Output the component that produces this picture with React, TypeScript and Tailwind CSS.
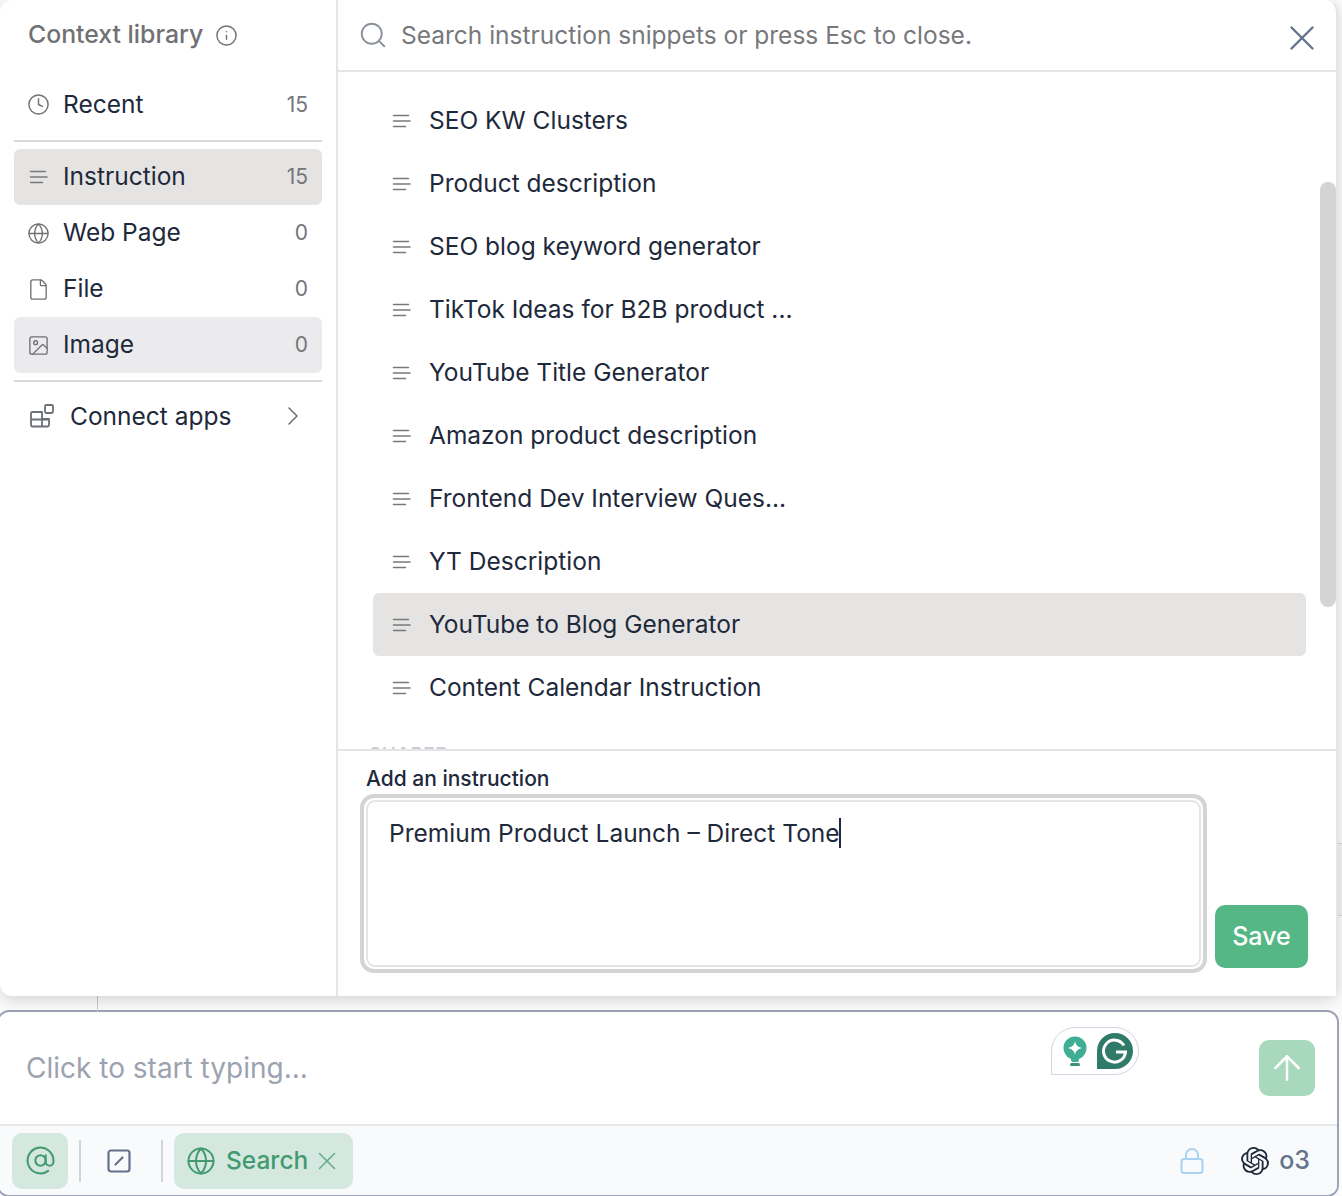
import { ArrowUp, AtSign, ChevronRight, Clock, File, Globe, Image, Info, Search, X } from 'lucide-react';
import { SiOpenai } from 'react-icons/si';

const categories = [
  { label: 'Instruction', count: 15, icon: 'lines', bg: 'bg-[#e5e4e2]' },
  { label: 'Web Page', count: 0, icon: 'globe', bg: '' },
  { label: 'File', count: 0, icon: 'file', bg: '' },
  { label: 'Image', count: 0, icon: 'image', bg: 'bg-[#ebebed]' },
];

const snippets = [
  'SEO KW Clusters',
  'Product description',
  'SEO blog keyword generator',
  'TikTok Ideas for B2B product ...',
  'YouTube Title Generator',
  'Amazon product description',
  'Frontend Dev Interview Ques...',
  'YT Description',
  'YouTube to Blog Generator',
  'Content Calendar Instruction',
];

function LinesIcon() {
  return (
    <svg width="23" height="20" viewBox="0 0 23 20" fill="none" stroke="#78797d" strokeWidth="1.5" strokeLinecap="round" className="shrink-0">
      <path d="M3.500 4.500h15M3.500 10h16.500M3.500 15.500h12" />
    </svg>
  );
}

function AppsIcon() {
  return (
    <svg width="26" height="26" viewBox="0 0 26 26" fill="none" stroke="#6b6f76" strokeWidth="1.8" strokeLinejoin="round" className="shrink-0">
      <path d="M2 10.500a1.500 1.500 0 0 1 1.500-1.500H13v14.500H3.500A1.500 1.500 0 0 1 2 22zM2 16.500h18M13 16h7v6a1.500 1.500 0 0 1-1.500 1.500H13" />
      <rect x="16" y="2" width="8" height="8" rx="1.500" />
    </svg>
  );
}

function CategoryIcon({ name }: { name: string }) {
  if (name === 'lines') return <LinesIcon />;
  if (name === 'globe') return <Globe size={23} strokeWidth={1.4} className="shrink-0 text-[#6f7175]" />;
  if (name === 'file') return <File size={23} strokeWidth={1.4} className="shrink-0 text-[#6f7175]" />;
  return <Image size={23} strokeWidth={1.4} className="shrink-0 text-[#6f7175]" />;
}

function GrammarlyBadge() {
  return (
    <div className="absolute left-[1052px] top-[15px] flex h-[48px] w-[88px] items-center gap-[10px] rounded-r-[24px] rounded-tl-[24px] border border-[#d5d5e3] bg-white pl-[11px]">
      <svg width="24" height="30" viewBox="0 0 24 30" className="shrink-0">
        <circle cx="12" cy="12" r="11.500" fill="#3fae94" />
        <path d="M8 20h8v4a2 2 0 0 1-2 2h-4a2 2 0 0 1-2-2z" fill="#3fae94" />
        <path d="M12 5c.8 4 2.800 6 7 7-4.200 1-6.200 3-7 7-.8-4-2.800-6-7-7 4.200-1 6.200-3 7-7z" fill="#fff" />
        <rect x="7" y="27" width="10" height="3" rx="1.500" fill="#3b8f7c" />
      </svg>
      <svg width="36" height="36" viewBox="0 0 36 36" className="shrink-0">
        <path d="M18 0a18 18 0 0 1 0 36H0V18A18 18 0 0 1 18 0z" fill="#2f7a69" />
        <path d="M27 12.500a11 11 0 1 0 1.500 6.500H19" fill="none" stroke="#fff" strokeWidth="3" />
      </svg>
    </div>
  );
}

export default function App() {
  return (
    <div className="relative h-[1196px] w-[1342px] overflow-hidden bg-[#fbfbfb] font-['Inter',sans-serif] text-[#1e293b]">
      {/* page behind the popup */}
      <div className="absolute right-0 top-[843px] h-[73px] w-[4px] border-y border-[#d9d9d9] bg-[#f4f4f4]" />
      <div className="absolute left-[97px] top-[990px] h-[22px] w-px bg-[#c9c9c9]" />

      {/* Context library popup */}
      <div className="relative flex h-[996px] w-[1338px] rounded-[12px] border-r-2 border-[#e5e5e5] bg-white shadow-[0_4px_16px_rgba(0,0,0,0.16)]">
        <aside className="flex w-[338px] shrink-0 flex-col border-r-2 border-[#e5e5e5] px-[14px]">
          <div className="flex h-[70px] items-center gap-[14px] pl-[14px] text-[24.8px] font-medium text-[#6f7175]">
            <span>Context library</span>
            <Info size={23} strokeWidth={1.5} className="-ml-[2px]" />
          </div>
          <div className="flex h-[70px] items-center gap-[13px] pl-[13px] pr-[14px]">
            <Clock size={23} strokeWidth={1.5} className="-mt-px shrink-0 text-[#6f7175]" />
            <span className="-mt-[2px] flex-1 text-[24.500px]">Recent</span>
            <span className="text-[21px] text-[#73757a]">15</span>
          </div>
          <div className="mb-[7px] h-[2px] bg-[#d9d9d9]" />
          {categories.map((c) => (
            <div key={c.label} className={`flex h-[56px] items-center gap-[13px] rounded-[6px] pl-[13px] pr-[14px] ${c.bg}`}>
              <CategoryIcon name={c.icon} />
              <span className="-mt-[2px] flex-1 text-[24.500px]">{c.label}</span>
              <span className="text-[21px] text-[#73757a]">{c.count}</span>
            </div>
          ))}
          <div className="mt-[7px] h-[2px] bg-[#d9d9d9]" />
          <div className="flex h-[68px] items-center gap-[15px] pl-[15px] pr-[13px]">
            <AppsIcon />
            <span className="flex-1 text-[24.500px]">Connect apps</span>
            <ChevronRight size={32} strokeWidth={1.2} className="text-[#6f7175]" />
          </div>
        </aside>

        <main className="relative flex min-w-0 flex-1 flex-col">
          <div className="flex h-[72px] shrink-0 items-center gap-[13px] border-b-2 border-[#e5e5e5] pl-[20px] pr-[13px]">
            <Search size={30} strokeWidth={1.5} className="shrink-0 text-[#8b929c]" />
            <span className="mt-px flex-1 text-[24.500px] text-[#76787c]">Search instruction snippets or press Esc to close.</span>
            <X size={42} strokeWidth={1.4} className="mt-[5px] shrink-0 text-[#64748b]" />
          </div>

          <div className="relative h-[677px] shrink-0 overflow-hidden px-[35px] pt-[17px]">
            <div className="w-[933px]">
              {snippets.map((s) => (
                <div key={s} className={`flex h-[63px] items-center gap-[16px] rounded-[6px] pl-[17px] ${s === 'YouTube to Blog Generator' ? 'bg-[#e5e4e2]' : ''}`}>
                  <LinesIcon />
                  <span className="text-[24.500px]">{s}</span>
                </div>
              ))}
            </div>
            <p className="mt-[22px] -ml-[4px] text-[19px] font-medium tracking-[0.5px] text-[#c5cad3]">SHARED</p>
            <div className="absolute right-0 top-[110px] h-[425px] w-4 rounded-full bg-[#d4d4d4]" />
          </div>

          <div className="flex h-[247px] shrink-0 flex-col border-t-2 border-[#e5e5e5] bg-white pl-[22px] pr-[28px]">
            <p className="ml-[6px] mt-[14px] text-[21px] font-medium leading-[28px]">Add an instruction</p>
            <div className="mt-px flex items-end gap-[8px]">
              <div className="h-[179px] w-[847px] rounded-[14px] border-[4px] border-[#d4d4d2] bg-white p-[2px]">
                <div className="h-full rounded-[9px] border-2 border-[#e5e5e5] px-[21px] pt-[10px]">
                  <span className="text-[24.500px] leading-[36px]">Premium Product Launch – Direct Tone</span>
                  <span className="-ml-px inline-block h-[30px] w-[2px] translate-y-[6px] bg-[#1e293b]" />
                </div>
              </div>
              <button className="mb-[5px] h-[63px] w-[93px] rounded-[10px] bg-[#55b786] text-[25px] font-medium text-white">Save</button>
            </div>
          </div>
        </main>
      </div>

      {/* Composer */}
      <div className="-ml-[3px] mt-[14px] flex h-[187px] w-[1342px] flex-col rounded-[12px] border-2 border-[#9ca3b4] bg-white">
        <div className="relative h-[114px] shrink-0 border-b-2 border-[#e5e7eb]">
          <span className="absolute left-[27px] top-[39px] text-[28px] leading-[34px] text-[#9ca3af]">Click to start typing...</span>
          <GrammarlyBadge />
          <div className="absolute left-[1260px] top-[28px] flex h-[56px] w-[56px] items-center justify-center rounded-[10px] bg-[#a9d9bd]">
            <ArrowUp size={40} strokeWidth={1.5} className="text-white" />
          </div>
        </div>
        <div className="flex flex-1 items-center rounded-b-[10px] bg-[#f8fafc] pl-[13px] pr-[27px]">
          <div className="flex h-[56px] w-[56px] items-center justify-center rounded-[10px] bg-[#d5e8e0]">
            <AtSign size={31} strokeWidth={1.6} className="text-[#439a70]" />
          </div>
          <div className="ml-[11px] h-[42px] w-[2px] bg-[#d1d5db]" />
          <div className="flex w-[80px] items-center pl-[26px]">
            <svg width="24" height="24" viewBox="0 0 24 24" fill="none" stroke="#64708a" strokeWidth="2.200">
              <rect x="1.500" y="1.500" width="21" height="21" rx="2.500" />
              <path d="M8.500 15.500l7-7" strokeLinecap="round" />
            </svg>
          </div>
          <div className="h-[42px] w-[2px] bg-[#d1d5db]" />
          <div className="ml-[11px] flex h-[56px] w-[179px] items-center rounded-[10px] bg-[#d5e8e0] pl-[12px] text-[#439a70]">
            <Globe size={30} strokeWidth={1.6} />
            <span className="ml-[10px] text-[24.500px] font-medium">Search</span>
            <X size={30} strokeWidth={1.200} className="ml-[4px] text-[#62ac88]" />
          </div>
          <div className="flex-1" />
          <svg width="24" height="26" viewBox="0 0 24 26" fill="none" stroke="#a9d3f2" strokeWidth="2">
            <rect x="1.500" y="11" width="21" height="14" rx="2.500" />
            <path d="M6 11V7a6 6 0 0 1 12 0v4" />
          </svg>
          <SiOpenai size={28} className="ml-[37px] text-[#1e293b]" />
          <span className="ml-[10px] mt-px text-[25px] font-medium text-[#64748b]">o3</span>
        </div>
      </div>
    </div>
  );
}
